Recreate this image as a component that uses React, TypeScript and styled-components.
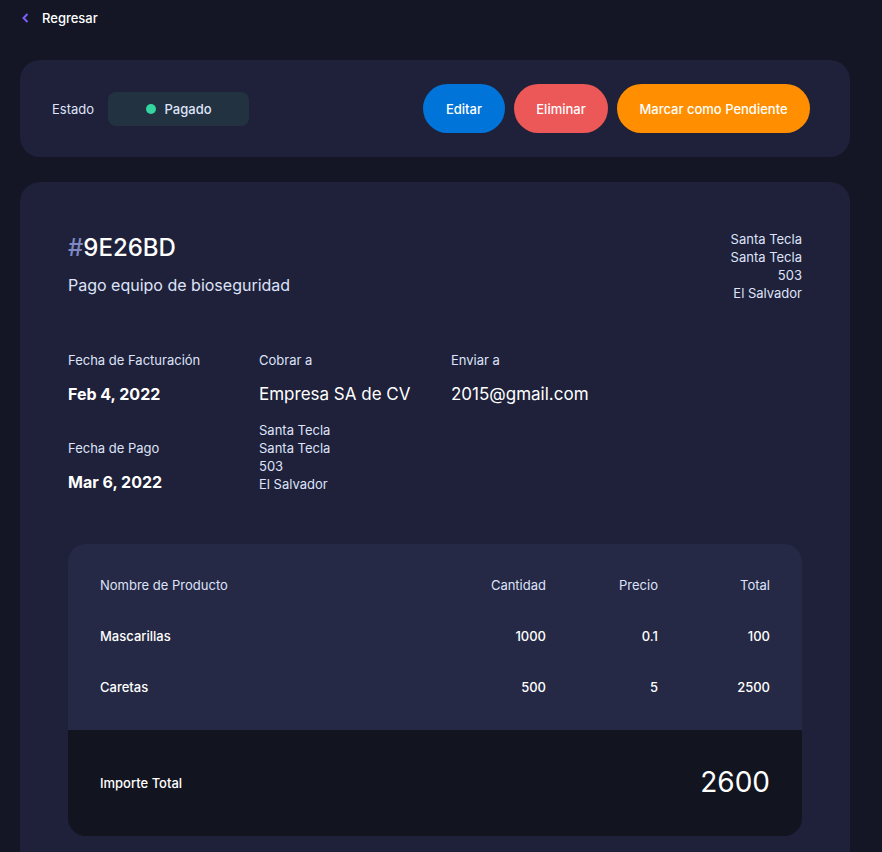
import React from "react";
import styled, { createGlobalStyle } from "styled-components";

const Global = createGlobalStyle`
  html, body { margin: 0; padding: 0; background: #141625; }
  body { font-family: Inter, "Noto Sans", sans-serif; color: #ffffff; overflow-x: hidden; }
  * { box-sizing: border-box; }
`;

const Page = styled.div`
  width: 882px;
  padding: 8px 32px 0 20px;
`;

const Back = styled.a`
  display: flex;
  width: fit-content;
  align-items: center;
  gap: 13px;
  height: 20px;
  padding-left: 2px;
  font-size: 13px;
  font-weight: 500;
  color: #ffffff;
  text-decoration: none;
  margin-bottom: 32px;
`;

const Card = styled.section<{ $pad: string }>`
  background: #1e2139;
  border-radius: 20px;
  padding: ${(p) => p.$pad};
`;

const StatusBar = styled(Card)`
  display: flex;
  align-items: center;
  margin-bottom: 25px;
`;

const StatusLabel = styled.span`
  font-size: 13px;
  color: #dfe3fa;
  margin-right: 14px;
`;

const Badge = styled.div`
  width: 141px;
  height: 34px;
  border-radius: 8px;
  background: #223240;
  display: flex;
  align-items: center;
  justify-content: center;
  gap: 9px;
  font-size: 13px;
  font-weight: 500;
  color: #dfe3fa;
`;

const Dot = styled.span`
  width: 10px;
  height: 10px;
  border-radius: 50%;
  background: #33d69f;
`;

const Actions = styled.div`
  margin-left: auto;
  display: flex;
  gap: 9px;
`;

const Button = styled.button<{ $bg: string; $w: number }>`
  width: ${(p) => p.$w}px;
  height: 49px;
  border: none;
  border-radius: 25px;
  background: ${(p) => p.$bg};
  color: #ffffff;
  font-family: inherit;
  font-size: 13px;
  font-weight: 500;
`;

const Header = styled.div`
  display: flex;
  justify-content: space-between;
  align-items: flex-start;
  margin-bottom: 49px;
`;

const Id = styled.h1`
  margin: 0 0 7px;
  font-size: 24px;
  line-height: 36px;
  font-weight: 500;
  color: #ffffff;
  span { color: #7e88c3; }
`;

const Desc = styled.p`
  margin: 0;
  font-size: 16px;
  line-height: 24px;
  color: #dfe3fa;
`;

const Address = styled.div<{ $align: string }>`
  font-size: 13px;
  line-height: 18px;
  color: #dfe3fa;
  text-align: ${(p) => p.$align};
`;

const InfoGrid = styled.div`
  display: grid;
  grid-template-columns: 191px 192px 1fr;
  margin-bottom: 50px;
`;

const Col = styled.div`
  display: flex;
  flex-direction: column;
`;

const Label = styled.div<{ $top?: number }>`
  font-size: 13px;
  line-height: 18px;
  color: #dfe3fa;
  margin-top: ${(p) => p.$top ?? 0}px;
`;

const Value = styled.div<{ $bold?: boolean }>`
  font-size: ${(p) => (p.$bold ? "16px" : "17px")};
  line-height: 24px;
  font-weight: ${(p) => (p.$bold ? 700 : 400)};
  color: #ffffff;
  margin-top: 13px;
`;

const AddrBlock = styled(Address)`
  margin-top: 15px;
`;

const Items = styled.div`
  border-radius: 18px;
  overflow: hidden;
`;

const ItemsBody = styled.div`
  background: #252945;
  padding: 32px 32px 34px;
  display: flex;
  flex-direction: column;
  gap: 33px;
`;

const Row = styled.div<{ $head?: boolean }>`
  display: grid;
  grid-template-columns: 1fr 112px 112px 112px;
  font-size: 13px;
  line-height: 18px;
  font-weight: ${(p) => (p.$head ? 400 : 500)};
  color: ${(p) => (p.$head ? "#dfe3fa" : "#ffffff")};
  & > span:not(:first-child) { text-align: right; }
`;

const Footer = styled.div`
  background: #12141f;
  height: 106px;
  padding: 0 32px;
  display: flex;
  align-items: center;
  justify-content: space-between;
`;

const FooterLabel = styled.span`
  font-size: 13px;
  font-weight: 500;
  color: #ffffff;
`;

const Amount = styled.span`
  font-size: 28px;
  line-height: 36px;
  font-weight: 400;
  color: #ffffff;
  margin-bottom: 2px;
`;

const items = [
  { name: "Mascarillas", qty: "1000", price: "0.1", total: "100" },
  { name: "Caretas", qty: "500", price: "5", total: "2500" },
];

export default function App() {
  return (
    <>
      <Global />
      <Page>
        <Back href="#">
          <svg width="7" height="10" viewBox="0 0 7 10" fill="none">
            <path d="M5.5 1L1.5 5l4 4" stroke="#7C5DFA" strokeWidth="2" />
          </svg>
          Regresar
        </Back>
        <StatusBar $pad="24px 40px 24px 32px">
          <StatusLabel>Estado</StatusLabel>
          <Badge>
            <Dot />
            Pagado
          </Badge>
          <Actions>
            <Button $bg="#0074d9" $w={82}>Editar</Button>
            <Button $bg="#ec5757" $w={94}>Eliminar</Button>
            <Button $bg="#ff8f00" $w={193}>Marcar como Pendiente</Button>
          </Actions>
        </StatusBar>
        <Card $pad="48px">
          <Header>
            <div>
              <Id>
                <span>#</span>9E26BD
              </Id>
              <Desc>Pago equipo de bioseguridad</Desc>
            </div>
            <Address $align="right">
              Santa Tecla
              <br />
              Santa Tecla
              <br />
              503
              <br />
              El Salvador
            </Address>
          </Header>
          <InfoGrid>
            <Col>
              <Label>Fecha de Facturación</Label>
              <Value $bold>Feb 4, 2022</Value>
              <Label $top={33}>Fecha de Pago</Label>
              <Value $bold>Mar 6, 2022</Value>
            </Col>
            <Col>
              <Label>Cobrar a</Label>
              <Value>Empresa SA de CV</Value>
              <AddrBlock $align="left">
                Santa Tecla
                <br />
                Santa Tecla
                <br />
                503
                <br />
                El Salvador
              </AddrBlock>
            </Col>
            <Col>
              <Label>Enviar a</Label>
              <Value>2015@gmail.com</Value>
            </Col>
          </InfoGrid>
          <Items>
            <ItemsBody>
              <Row $head>
                <span>Nombre de Producto</span>
                <span>Cantidad</span>
                <span>Precio</span>
                <span>Total</span>
              </Row>
              {items.map((it) => (
                <Row key={it.name}>
                  <span>{it.name}</span>
                  <span>{it.qty}</span>
                  <span>{it.price}</span>
                  <span>{it.total}</span>
                </Row>
              ))}
            </ItemsBody>
            <Footer>
              <FooterLabel>Importe Total</FooterLabel>
              <Amount>2600</Amount>
            </Footer>
          </Items>
        </Card>
      </Page>
    </>
  );
}
